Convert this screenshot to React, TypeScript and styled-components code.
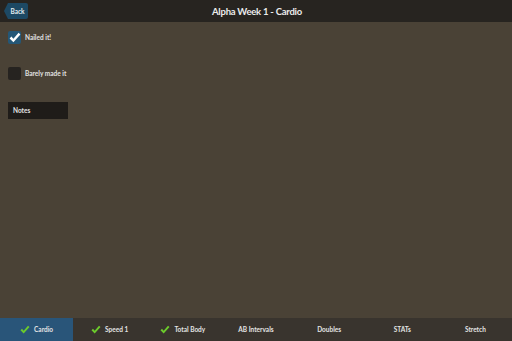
import React from "react";
import styled, { createGlobalStyle } from "styled-components";

const tabs = [
	{ label: "Cardio", done: true },
	{ label: "Speed 1", done: true },
	{ label: "Total Body", done: true },
	{ label: "AB Intervals", done: false },
	{ label: "Doubles", done: false },
	{ label: "STATs", done: false },
	{ label: "Stretch", done: false },
];

const Tick: React.FC<{ color: string; size: number }> = ({ color, size }) => (
	<svg width={size} height={size} viewBox="0 0 12 12">
		<path d="M0.6 6.4 L4.4 10.2 L11.4 2.4 L9.6 0.8 L4.4 6.8 L2.4 4.6 Z" fill={color} />
	</svg>
);

export default function App() {
	return (
		<Main>
			<GlobalStyle />
			<Header>
				<BackButton>Back</BackButton>
				<Title>Alpha Week 1 - Cardio</Title>
			</Header>
			<Content>
				<CheckRow>
					<Box checked>
						<Tick color="#ffffff" size={12} />
					</Box>
					<Label>Nailed it!</Label>
				</CheckRow>
				<CheckRow style={{ marginTop: 23 }}>
					<Box />
					<Label>Barely made it</Label>
				</CheckRow>
				<Notes>Notes</Notes>
			</Content>
			<TabBar>
				{tabs.map((t, i) => (
					<Tab key={t.label} active={i === 0}>
						{t.done && <Tick color="#6ccb2c" size={10} />}
						<span>{t.label}</span>
					</Tab>
				))}
			</TabBar>
		</Main>
	);
}

//////////////////////////////////////////////////////////////////////////////////////////

const GlobalStyle = createGlobalStyle`
	html, body, #root {
		margin: 0;
		padding: 0;
		width: 100%;
		height: 100%;
	}
	body {
		font-family: Lato, "Open Sans", sans-serif;
		background: #4a4236;
		overflow: hidden;
	}
`;

const Main = styled.div`
	width: 512px;
	height: 341px;
	display: flex;
	flex-direction: column;
	background: #4a4236;
`;

const Header = styled.div`
	position: relative;
	height: 22px;
	flex: none;
	background: #272420;
	display: flex;
	align-items: center;
	justify-content: center;
`;

const BackButton = styled.div`
	position: absolute;
	left: 4px;
	top: 3px;
	width: 24px;
	height: 16px;
	background: #1d4964;
	clip-path: polygon(4px 0, 100% 0, 100% 100%, 4px 100%, 0 50%);
	border-radius: 2px;
	color: #e6edf2;
	font-size: 6.5px;
	font-weight: 700;
	display: flex;
	align-items: center;
	justify-content: center;
	padding-left: 3px;
	box-sizing: border-box;
`;

const Title = styled.div`
	color: #ececec;
	font-size: 9.5px;
	font-weight: 700;
	letter-spacing: -0.25px;
	margin-left: 2px;
`;

const Content = styled.div`
	flex: 1;
	padding: 9px 8px 0;
	display: flex;
	flex-direction: column;
	align-items: flex-start;
`;

const CheckRow = styled.div`
	display: flex;
	align-items: center;
	gap: 4px;
`;

const Box = styled.div<{ checked?: boolean }>`
	width: 13px;
	height: 13px;
	border-radius: 2px;
	background: ${(p) => (p.checked ? "#245777" : "#262320")};
	display: flex;
	align-items: center;
	justify-content: center;
`;

const Label = styled.div`
	color: #e2e2e2;
	font-size: 6.5px;
	font-weight: 700;
`;

const Notes = styled.div`
	margin-top: 22px;
	width: 60px;
	height: 17px;
	box-sizing: border-box;
	background: #1f1c19;
	color: #e2e2e2;
	font-size: 6.5px;
	font-weight: 700;
	padding-left: 5px;
	display: flex;
	align-items: center;
`;

const TabBar = styled.div`
	height: 23px;
	flex: none;
	background: #39342e;
	display: grid;
	grid-template-columns: repeat(7, 1fr);
`;

const Tab = styled.div<{ active?: boolean }>`
	background: ${(p) => (p.active ? "#295579" : "transparent")};
	color: #e4e4e4;
	font-size: 6.5px;
	font-weight: 700;
	display: flex;
	align-items: center;
	justify-content: center;
	gap: 4px;
`;
